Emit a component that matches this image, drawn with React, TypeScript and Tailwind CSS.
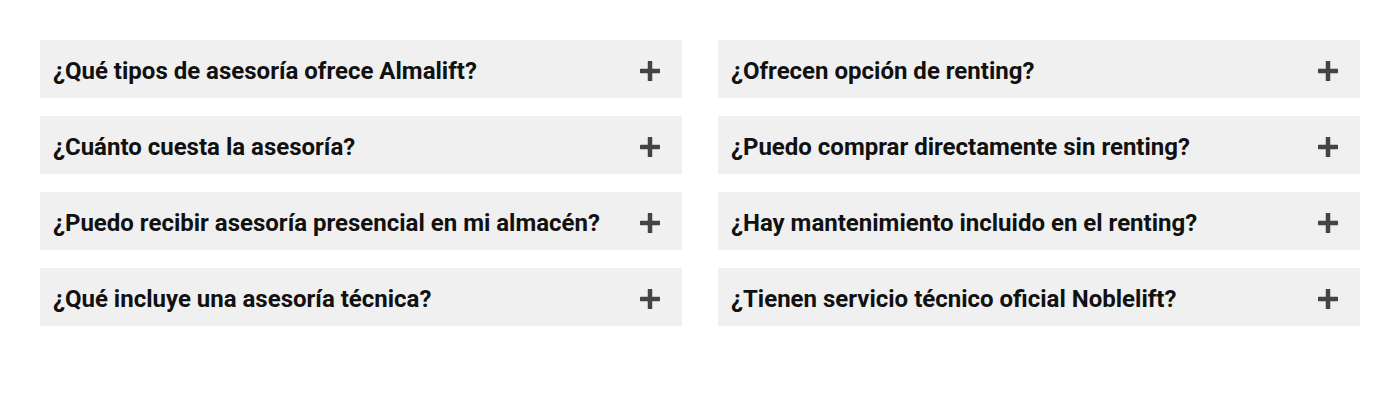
const left = [
  '¿Qué tipos de asesoría ofrece Almalift?',
  '¿Cuánto cuesta la asesoría?',
  '¿Puedo recibir asesoría presencial en mi almacén?',
  '¿Qué incluye una asesoría técnica?',
]

const right = [
  '¿Ofrecen opción de renting?',
  '¿Puedo comprar directamente sin renting?',
  '¿Hay mantenimiento incluido en el renting?',
  '¿Tienen servicio técnico oficial Noblelift?',
]

function PlusIcon() {
  return (
    <svg width="20" height="20" viewBox="0 0 20 20" className="shrink-0">
      <path d="M10 1v18M1 10h18" stroke="#444444" strokeWidth="4.5" strokeLinecap="round" />
    </svg>
  )
}

function Item({ q }: { q: string }) {
  return (
    <button className="flex h-[58px] w-full items-center justify-between bg-[#f0f0f0] pt-1 pl-[13px] pr-[22px] text-left">
      <span className="text-[24px] leading-none font-bold text-[#111111]">{q}</span>
      <PlusIcon />
    </button>
  )
}

export default function App() {
  return (
    <div className="min-h-[400px] bg-white px-10 pt-10 font-['Roboto',sans-serif]">
      <div className="grid grid-cols-2 gap-x-9">
        {[left, right].map((col, i) => (
          <div key={i} className="flex flex-col gap-[18px]">
            {col.map((q) => (
              <Item key={q} q={q} />
            ))}
          </div>
        ))}
      </div>
    </div>
  )
}
